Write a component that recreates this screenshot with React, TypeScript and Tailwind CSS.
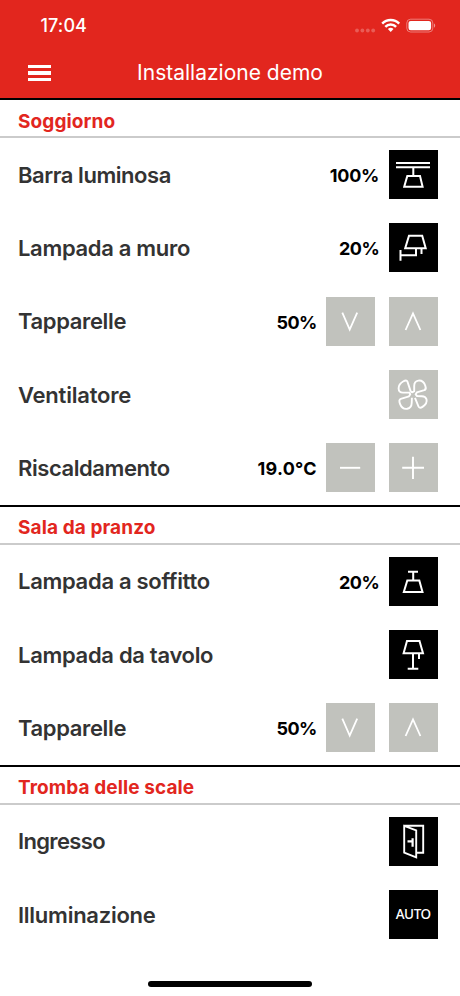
import type { ReactNode } from 'react';

type Row = {
  label: string;
  labelClass?: string;
  value?: string;
  valueClass?: string;
  buttons: { icon: ReactNode; active?: boolean }[];
};

type Section = { title: string; titleClass?: string; rows: Row[] };

function Glyph({ children, width = 2 }: { children: ReactNode; width?: number }) {
  return (
    <svg viewBox="0 0 49 49" className="w-full h-full" fill="none" stroke="#fff" strokeWidth={width}>
      {children}
    </svg>
  );
}

const barLight = (
  <Glyph>
    <path d="M7 13H41M7 17.2H41M24.3 17.2V26M18.3 26H31L33.6 36.7H15.2Z" />
  </Glyph>
);

const wallLamp = (
  <Glyph>
    <path d="M20 12.8H33.2L36.7 25.3H16.2ZM27 25.3V32.2H11.5M11.5 27V37.8M32.5 25.3V31" />
  </Glyph>
);

const ceilingLamp = (
  <Glyph>
    <path d="M19 14.7H29M24.2 14.7V23.5M18.3 23.5H30.3L33.5 35H14.8Z" />
  </Glyph>
);

const tableLamp = (
  <Glyph>
    <path d="M18 11H30.5L34 23.3H14.6ZM24 23.3V38.7M18.7 38.7H29.3M30 23.3V29" />
  </Glyph>
);

const down = (
  <Glyph width={1.8}>
    <path d="M16.3 15.7L23.7 32.5L31.2 15.7" />
  </Glyph>
);

const up = (
  <Glyph width={1.8}>
    <path d="M16.6 33L24 16.5L31.4 33" />
  </Glyph>
);

const minus = (
  <Glyph width={1.9}>
    <path d="M14 24.8H34.2" />
  </Glyph>
);

const plus = (
  <Glyph width={1.9}>
    <path d="M13.2 24.8H35M24 13.7V36" />
  </Glyph>
);

const fan = (
  <Glyph width={1.9}>
    <path
      strokeLinejoin="round"
      d="M21.8 21.6L18.4 11.5C17.9 10.2 16.2 10.3 14.5 11.3C11.5 13 9.5 15.5 9.6 18.5C9.7 21.2 11.5 22.6 14 22.6H20.2L21.3 24.3L20 26.3L11.8 28.8C10 29.4 10.1 31.5 11 33.8C12.3 37.2 15 39.3 18.2 38.8C21.5 38.2 22.6 35.8 22.7 33L22.9 27.8M26 27.8L29.5 36.5C30.2 38.2 31.8 38.1 33.5 36.9C36.3 35 38.2 32 37.5 29.3C36.8 27 35 26.1 32.5 26.2L28 26L26.6 24.4L27.8 22.4L35.3 20.2C37 19.6 37.1 18 36.3 15.7C35.2 12.5 32.5 10.2 29.3 10.6C26.4 11 25.2 13.3 25.2 16V21.2L23.5 22.3L21.8 21.6"
    />
  </Glyph>
);

const door = (
  <Glyph width={1.9}>
    <path d="M15.2 8.8L27.2 13.3V40.4L15.2 35.7ZM15.2 8.8H34.2V35.7H27.2" />
    <path d="M23.6 21.3V29.8M18.5 24.3H23.6" strokeWidth="2.2" />
  </Glyph>
);

const auto = (
  <span className="font-['Noto_Sans',sans-serif] text-[13.5px] leading-none font-medium tracking-[-0.4px]">AUTO</span>
);

const sections: Section[] = [
  {
    title: 'Soggiorno',
    titleClass: 'tracking-[0.1px]',
    rows: [
      { label: 'Barra luminosa', labelClass: 'tracking-[-0.45px]', value: '100%', valueClass: 'tracking-[-0.2px]', buttons: [{ icon: barLight, active: true }] },
      { label: 'Lampada a muro', labelClass: 'tracking-[-0.32px]', value: '20%', valueClass: 'tracking-[-0.5px]', buttons: [{ icon: wallLamp, active: true }] },
      { label: 'Tapparelle', labelClass: 'tracking-[-0.36px]', value: '50%', valueClass: 'tracking-[-0.5px]', buttons: [{ icon: down }, { icon: up }] },
      { label: 'Ventilatore', labelClass: 'tracking-[-0.2px]', buttons: [{ icon: fan }] },
      { label: 'Riscaldamento', labelClass: 'tracking-[-0.43px]', value: '19.0°C', valueClass: 'tracking-[0.25px]', buttons: [{ icon: minus }, { icon: plus }] },
    ],
  },
  {
    title: 'Sala da pranzo',
    titleClass: 'tracking-[0.1px]',
    rows: [
      { label: 'Lampada a soffitto', labelClass: 'tracking-[-0.3px]', value: '20%', valueClass: 'tracking-[-0.5px]', buttons: [{ icon: ceilingLamp, active: true }] },
      { label: 'Lampada da tavolo', labelClass: 'tracking-[-0.31px]', buttons: [{ icon: tableLamp, active: true }] },
      { label: 'Tapparelle', labelClass: 'tracking-[-0.36px]', value: '50%', valueClass: 'tracking-[-0.5px]', buttons: [{ icon: down }, { icon: up }] },
    ],
  },
  {
    title: 'Tromba delle scale',
    titleClass: 'tracking-[0.1px]',
    rows: [
      { label: 'Ingresso', labelClass: 'tracking-[-0.65px]', buttons: [{ icon: door, active: true }] },
      { label: 'Illuminazione', labelClass: 'tracking-[-0.25px]', buttons: [{ icon: auto, active: true }] },
    ],
  },
];

function StatusIcons() {
  return (
    <svg width="84" height="18" viewBox="0 0 84 18" fill="none">
      <g fill="#fff" fillOpacity="0.25">
        <circle cx="5" cy="13.5" r="1.9" />
        <circle cx="10.4" cy="13.5" r="1.9" />
        <circle cx="15.8" cy="13.5" r="1.9" />
        <circle cx="21.2" cy="13.5" r="1.9" />
      </g>
      <g stroke="#fff" strokeWidth="2.5">
        <path d="M30.2 6.6A12 12 0 0 1 47.2 6.6" />
        <path d="M33.3 9.8A7.6 7.6 0 0 1 44.1 9.8" />
      </g>
      <path d="M35.9 12.1A4 4 0 0 1 41.5 12.1L38.7 14.9Z" fill="#fff" />
      <rect x="54.8" y="2.2" width="26" height="12.8" rx="3.8" stroke="#fff" strokeOpacity="0.4" />
      <rect x="56.5" y="3.9" width="22.6" height="9.4" rx="2.2" fill="#fff" />
      <path d="M82 6.5C83.6 7.1 83.6 10.1 82 10.7Z" fill="#fff" fillOpacity="0.5" />
    </svg>
  );
}

function Header() {
  return (
    <header className="h-[98px] bg-[#e2261e] text-white">
      <div className="h-[49px] pt-[2px] pl-[40.5px] pr-6 flex items-center justify-between">
        <span className="text-[18px] font-medium tracking-[0.1px]">17:04</span>
        <StatusIcons />
      </div>
      <div className="h-[49px] pb-px grid grid-cols-[80px_300px_80px] items-center">
        <button className="ml-7 w-[23px] flex flex-col gap-[3.5px]">
          <span className="h-[3.3px] w-full bg-white" />
          <span className="h-[3.3px] w-full bg-white" />
          <span className="h-[3.3px] w-full bg-white" />
        </button>
        <h1 className="text-center text-[21px]">Installazione demo</h1>
      </div>
    </header>
  );
}

export default function App() {
  return (
    <div className="w-[460px] h-[996px] flex flex-col overflow-hidden bg-white font-['Inter',sans-serif]">
      <Header />
      <main className="flex-1">
        {sections.map((section) => (
          <section key={section.title}>
            <h2 className="h-10 pt-2 pl-[18px] flex items-center border-t-2 border-t-black border-b-2 border-b-[#cbcbcb] text-[19px] font-bold text-[#e2261e]">
              <span className={section.titleClass}>{section.title}</span>
            </h2>
            {section.rows.map((row) => (
              <div key={row.label} className="h-[73.33px] pl-[18px] pr-[22.3px] flex items-center">
                <span className="flex-1 pt-px text-[22px] font-semibold text-[#333]">
                  <span className={row.labelClass}>{row.label}</span>
                </span>
                <span className="mr-[9.5px] pt-[2px] text-[18px] font-bold text-black">
                  <span className={row.valueClass}>{row.value}</span>
                </span>
                <div className="flex gap-[13.3px]">
                  {row.buttons.map((button, i) => (
                    <button
                      key={i}
                      className={`size-[49px] flex items-center justify-center text-white ${button.active ? 'bg-black' : 'bg-[#c1c2bd]'}`}
                    >
                      {button.icon}
                    </button>
                  ))}
                </div>
              </div>
            ))}
          </section>
        ))}
      </main>
      <div className="mx-auto mb-[9px] h-[6px] w-[164px] rounded-full bg-black" />
    </div>
  );
}
